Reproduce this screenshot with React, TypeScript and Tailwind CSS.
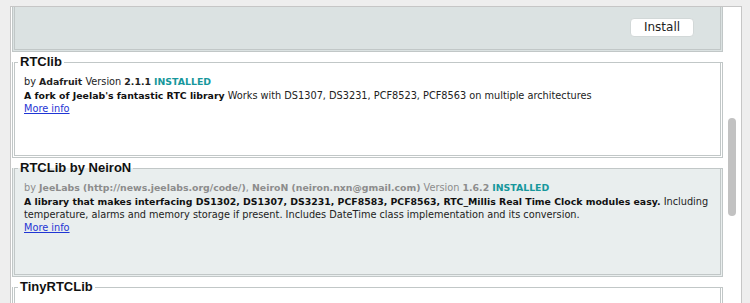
import React from 'react';

type Lib = {
  title: string;
  by: React.ReactNode;
  version: string;
  sentence: string;
  paragraph: React.ReactNode;
  selected?: boolean;
};

const libs: Lib[] = [
  {
    title: 'RTClib',
    by: <b className="font-bold text-[9.35px]">Adafruit</b>,
    version: '2.1.1',
    sentence: "A fork of Jeelab's fantastic RTC library",
    paragraph: ' Works with DS1307, DS3231, PCF8523, PCF8563 on multiple architectures',
  },
  {
    title: 'RTCLib by NeiroN',
    by: (
      <>
        <b className="font-bold text-[9.35px]">JeeLabs (http://news.jeelabs.org/code/)</b>,{' '}
        <b className="font-bold text-[9.35px]">NeiroN (neiron.nxn@gmail.com)</b>
      </>
    ),
    version: '1.6.2',
    sentence:
      'A library that makes interfacing DS1302, DS1307, DS3231, PCF8583, PCF8563, RTC_Millis Real Time Clock modules easy.',
    paragraph: (
      <>
        {' '}Including
        <br />
        temperature, alarms and memory storage if present. Includes DateTime class implementation and its conversion.
      </>
    ),
    selected: true,
  },
];

const LibraryItem = ({ lib }: { lib: Lib }) => (
  <fieldset
    className={`mt-px border-[3px] border-t border-double border-[#c1c7c7] px-[9px] pb-[40px] ${
      lib.selected ? 'bg-[#e9eeee]' : 'bg-white'
    }`}
  >
    <legend className="-ml-[6px] px-[2px] font-['Liberation_Sans',Arial,sans-serif] text-[13px] font-bold leading-[18px] text-[#111]">
      {lib.title}
    </legend>
    <div className="pt-[4px] text-[9.75px]">
      <p className={`leading-[14px] ${lib.selected ? 'text-[#8c8c8c]' : 'text-[#222]'}`}>
        by {lib.by} Version <b className="font-bold text-[9.35px]">{lib.version}</b>{' '}
        <b className="font-bold text-[9.35px] text-[#17979c]">INSTALLED</b>
      </p>
      <p className="leading-[13px] text-[#222]">
        <b className="font-bold text-[9.35px] text-[#111]">{lib.sentence}</b>
        {lib.paragraph}
      </p>
      <p className="leading-[13px]">
        <a href="#" className="text-[#1f35d4] underline">
          More info
        </a>
      </p>
    </div>
  </fieldset>
);

const App: React.FC = () => {
  return (
    <div className="h-[303px] w-[750px] overflow-hidden bg-[#eeeeee] pl-[10px] pt-[6px] font-['DejaVu_Sans',Verdana,sans-serif]">
      <div className="flex h-[400px] w-[732px] border border-[#c6c6c6] bg-white">
        {/* list */}
        <div className="flex w-[712px] flex-col pl-px">
          {/* tail of the previous (selected) item */}
          <div className="flex h-[45px] justify-end border-x-[3px] border-b-[3px] border-double border-[#c1c7c7] bg-[#dbe2e2] pr-[26px] pt-[11px]">
            <button className="h-[19px] w-[64px] rounded-[4px] border border-[#d2d8d8] bg-white text-[12px] leading-[17px] text-[#222]">
              Install
            </button>
          </div>
          {libs.map((lib) => (
            <LibraryItem key={lib.title} lib={lib} />
          ))}
          <fieldset className="mt-px h-[100px] border-[3px] border-t border-double border-[#c1c7c7] bg-white px-[9px]">
            <legend className="-ml-[6px] px-[2px] font-['Liberation_Sans',Arial,sans-serif] text-[13px] font-bold leading-[18px] text-[#111]">
              TinyRTCLib
            </legend>
          </fieldset>
        </div>
        {/* scrollbar */}
        <div className="flex-1 pl-[5px] pt-[111px]">
          <div className="h-[98px] w-[8px] rounded-full bg-[#c2c2c2]" />
        </div>
      </div>
    </div>
  );
};

export default App;
